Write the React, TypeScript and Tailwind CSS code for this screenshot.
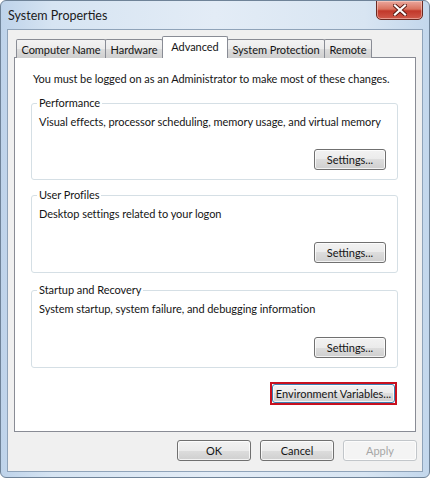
import React from "react";

const font = { fontFamily: 'Lato, "Noto Sans", "Liberation Sans", sans-serif' };
const txt = "text-[11px] leading-[16px] tracking-[-0.05px] text-[#151515] whitespace-nowrap";

function WinButton({
  label,
  w,
  h = "h-[21px]",
  disabled,
  focused,
}: {
  label: string;
  w: string;
  h?: string;
  disabled?: boolean;
  focused?: boolean;
}) {
  return (
    <div
      className={`${w} ${h} rounded-[3px] border ${
        disabled
          ? "border-[#c2c6ca] bg-[#f4f4f4] text-[#a6a6a6]"
          : focused
          ? "border-[#3c7fb1] text-[#151515] bg-[linear-gradient(#f2f2f2_0%,#ebebeb_50%,#dddddd_50%,#cfcfcf_100%)]"
          : "border-[#707070] text-[#151515] bg-[linear-gradient(#f2f2f2_0%,#ebebeb_50%,#dddddd_50%,#cfcfcf_100%)]"
      } flex items-center justify-center text-[11px] leading-none whitespace-nowrap shadow-[inset_0_0_0_1px_rgba(255,255,255,0.75)]`}
    >
      {label}
    </div>
  );
}

function Group({
  title,
  text,
  mt,
  h,
}: {
  title: string;
  text: string;
  mt: string;
  h: string;
}) {
  return (
    <div className={`relative ${mt} ml-[16px] w-[367px] ${h} rounded-[3px] border border-[#d5dfe5] flex flex-col`}>
      <span className={`absolute -top-[9px] left-[5px] bg-white px-[2px] ${txt}`}>{title}</span>
      <div className={`pl-[7px] pt-[10px] ${txt}`}>{text}</div>
      <div className="mt-auto mb-[9px] mr-[11px] flex justify-end">
        <WinButton label="Settings..." w="w-[72px]" />
      </div>
    </div>
  );
}

export default function App() {
  const tabs = [
    { name: "Computer Name", w: "w-[90px]" },
    { name: "Hardware", w: "w-[58px]" },
    { name: "Advanced", w: "w-[66px]", sel: true },
    { name: "System Protection", w: "w-[98px]" },
    { name: "Remote", w: "w-[48px]" },
  ];
  return (
    <div
      style={font}
      className="relative w-[430px] h-[478px] overflow-hidden rounded-[6px] border border-[#6f8398] bg-[linear-gradient(90deg,#bed3ea_0%,#d6e4f2_12%,#e3ecf6_50%,#d8e5f2_85%,#c3d7ec_100%)] flex flex-col"
    >
      {/* title bar */}
      <div className="h-[28px] flex items-start justify-between pl-[7px] pr-[6px]">
        <span className="mt-[7px] text-[12.5px] leading-[16px] text-[#1b1b1b] whitespace-nowrap">System Properties</span>
        <div className="-mt-px w-[47px] h-[20px] rounded-b-[5px] border border-[#6b2a22] bg-[linear-gradient(#eaa79d_0%,#d9735f_45%,#c2382a_55%,#d0594a_100%)] flex items-center justify-center shadow-[inset_0_0_0_1px_rgba(255,220,210,0.5)]">
          <svg width="14" height="12" viewBox="0 0 14 12">
            <path d="M2 1.5 L12 10.5 M12 1.5 L2 10.5" stroke="#5a1a14" strokeWidth="4" strokeLinecap="square" />
            <path d="M2 1.5 L12 10.5 M12 1.5 L2 10.5" stroke="#ffffff" strokeWidth="2.2" strokeLinecap="square" />
          </svg>
        </div>
      </div>

      {/* client area */}
      <div className="ml-[6px] w-[416px] h-[443px] border border-[#8fa3b9] bg-[#f0f0f0] flex flex-col">
        {/* tab strip */}
        <div className="ml-[8px] mt-[6px] h-[22px] flex items-end relative z-10">
          {tabs.map((t, i) =>
            t.sel ? (
              <div
                key={t.name}
                className={`${t.w} -ml-px h-[22px] border border-b-0 border-[#898c95] rounded-t-[2px] bg-white flex items-start justify-center pt-[2px] ${txt}`}
              >
                {t.name}
              </div>
            ) : (
              <div
                key={t.name}
                className={`${t.w} ${i === 0 ? "" : "-ml-px"} h-[19px] border border-b-0 border-[#898c95] rounded-t-[2px] bg-[linear-gradient(#f3f3f3_0%,#ebebeb_50%,#dddddd_50%,#cfcfcf_100%)] flex items-start justify-center pt-[2px] ${txt}`}
              >
                {t.name}
              </div>
            )
          )}
        </div>

        {/* tab panel */}
        <div className="-mt-px ml-[6px] w-[402px] h-[375px] border border-[#898c95] bg-white flex flex-col">
          <div className={`ml-[18px] mt-[13px] ${txt}`}>
            You must be logged on as an Administrator to make most of these changes.
          </div>
          <Group
            mt="mt-[16px]"
            h="h-[77px]"
            title="Performance"
            text="Visual effects, processor scheduling, memory usage, and virtual memory"
          />
          <Group mt="mt-[15px]" h="h-[78px]" title="User Profiles" text="Desktop settings related to your logon" />
          <Group
            mt="mt-[17px]"
            h="h-[78px]"
            title="Startup and Recovery"
            text="System startup, system failure, and debugging information"
          />
          <div className="mt-[14px] mr-[18px] flex justify-end">
            <div className="border-2 border-[#c8101e]">
              <WinButton label="Environment Variables..." w="w-[123px]" h="h-[19px]" focused />
            </div>
          </div>
        </div>

        {/* bottom buttons */}
        <div className="mt-[8px] mr-[5px] flex justify-end gap-[9px]">
          <WinButton label="OK" w="w-[74px]" />
          <WinButton label="Cancel" w="w-[74px]" />
          <WinButton label="Apply" w="w-[74px]" disabled />
        </div>
      </div>
    </div>
  );
}
